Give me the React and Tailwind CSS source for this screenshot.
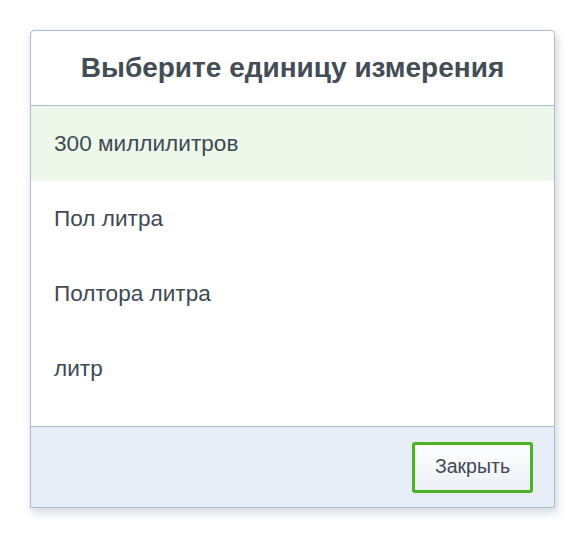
export default function App() {
  const items = ["300 миллилитров", "Пол литра", "Полтора литра", "литр"];

  return (
    <div className="w-[585px] h-[539px] bg-white pt-[30px] pl-[30px] font-['Liberation_Sans',Arial,sans-serif]">
      <div className="w-[525px] h-[478px] flex flex-col border border-[#a9bdcf] rounded-t-[4px] bg-white shadow-[2px_4px_10px_rgba(60,90,120,0.25)]">
        {/* Header */}
        <div className="h-[75px] shrink-0 flex items-center justify-center border-b border-[#a9bdcf]">
          <h2 className="text-[28px] font-bold text-[#434d56]">Выберите единицу измерения</h2>
        </div>

        {/* Options */}
        <div className="flex-1 flex flex-col pb-[20px]">
          {items.map((item, i) => (
            <div
              key={item}
              className={[
                "h-[75px] flex items-center px-[23px] text-[22.6px] text-[#3f4a54]",
                i === 0 ? "bg-[#eef8ea]" : "bg-white",
              ].join(" ")}
            >
              {item}
            </div>
          ))}
        </div>

        {/* Footer */}
        <div className="h-[81px] shrink-0 flex items-center justify-end pr-[21px] bg-[#e8eef5] border-t border-[#a9bdcf]">
          <button className="w-[121px] h-[51px] rounded-[3px] border-[3px] border-[#4cb226] bg-gradient-to-b from-white to-[#eaeff5] text-[19.5px] text-[#3f4a54]">
            Закрыть
          </button>
        </div>
      </div>
    </div>
  );
}
